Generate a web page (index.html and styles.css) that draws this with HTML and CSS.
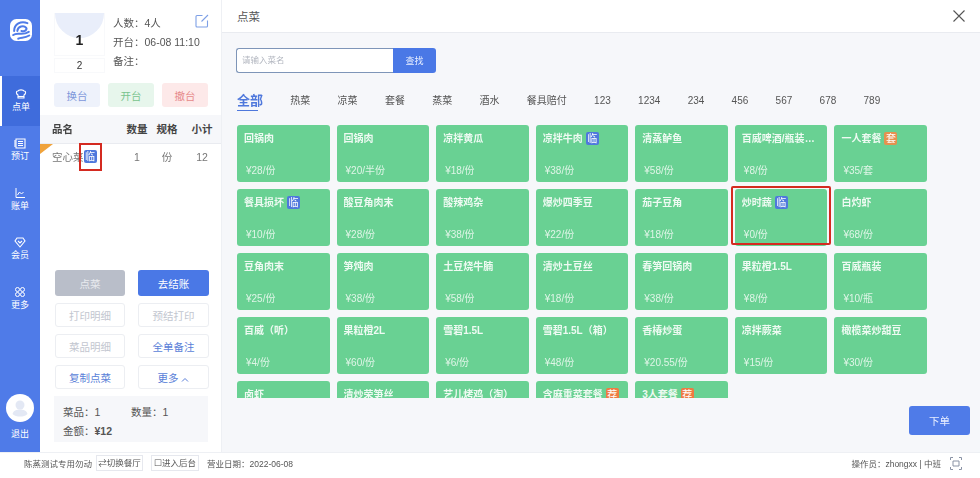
FILE: index.html
```html
<!DOCTYPE html>
<html lang="zh-CN">
<head>
<meta charset="utf-8">
<title>点菜</title>
<link rel="stylesheet" href="styles.css">
</head>
<body>
<div class="app">
  <div class="top">
    <nav class="sidebar">
      <div class="logo">
        <svg width="22" height="22" viewBox="0 0 24 24" fill="none" stroke="#4f7be8" stroke-width="2.200" stroke-linecap="round"><rect width="24" height="24" rx="7" fill="#fff" stroke="none"/><path d="M19 4.500C12 1.500 4.500 5.500 4.500 13"/><path d="M8 13c.5-5 7-6.500 9.500-3.500 1.500 2-1 4.500-5 3.500"/><path d="M3.500 17.500c5-4 9 1.500 17-3.500"/><path d="M9 21.500c3-2 6.500 0 12-3.500"/></svg>
      </div>
      <a class="nav active">
        <svg width="12" height="12" viewBox="0 0 12 12" fill="none" stroke="#fff" stroke-width="1.100"><path d="M3 7C1 6 .8 3 3 3c.5-1.500 5.500-1.500 6 0 2.200 0 2 3 0 4v3H3z"/><path d="M3 8.500h6"/></svg>
        <span>点单</span>
      </a>
      <a class="nav">
        <svg width="12" height="12" viewBox="0 0 12 12" fill="none" stroke="#fff" stroke-width="1.100"><path d="M2 2h9v9H2z"/><path d="M4 4.500h5M4 6.500h5M4 8.500h5M1 3v7"/></svg>
        <span>预订</span>
      </a>
      <a class="nav">
        <svg width="12" height="12" viewBox="0 0 12 12" fill="none" stroke="#fff" stroke-width="1"><path d="M2 1v9.500h9"/><path d="M3.500 8l2-3 2 2 2-2"/></svg>
        <span>账单</span>
      </a>
      <a class="nav">
        <svg width="12" height="12" viewBox="0 0 12 12" fill="none" stroke="#fff" stroke-width="1.100"><path d="M3 2h6l2 3-5 6-5-6z"/><path d="M4 5l2 2 2-2"/></svg>
        <span>会员</span>
      </a>
      <a class="nav">
        <svg width="12" height="12" viewBox="0 0 12 12" fill="none" stroke="#fff" stroke-width="1"><circle cx="3.500" cy="3.500" r="2"/><circle cx="8.500" cy="3.500" r="2"/><circle cx="3.500" cy="8.500" r="2"/><circle cx="8.500" cy="8.500" r="2"/></svg>
        <span>更多</span>
      </a>
      <div class="user">
        <div class="avatar">
          <svg width="28" height="28" viewBox="0 0 28 28"><circle cx="14" cy="14" r="14" fill="#fff"/><circle cx="14" cy="11" r="4.500" fill="#e3e8f4"/><path d="M6.500 20c1-3.500 4-4.500 7.500-4.500s6.500 1 7.500 4.500c-2 2-4.500 2.500-7.500 2.500s-5.500-.5-7.500-2.500z" fill="#e3e8f4"/></svg>
        </div>
        <span>退出</span>
      </div>
    </nav>

    <aside class="panel">
      <section class="table-info">
        <div class="table-card">
          <div class="table-head"><i class="dome"></i><b>1</b></div>
          <div class="table-seat">2</div>
        </div>
        <div class="table-meta">
          <p>人数：4人</p>
          <p>开台：06-08 11:10</p>
          <p>备注：</p>
        </div>
        <svg class="edit" width="14" height="14" viewBox="0 0 14 14" fill="none" stroke="#7ea0e6" stroke-width="1.100"><path d="M7.500 1.500H2a1 1 0 0 0-1 1V12a1 1 0 0 0 1 1h9.500a1 1 0 0 0 1-1V6.500"/><path d="M6.500 7.500L13 1"/></svg>
      </section>
      <div class="ops">
        <button class="op blue">换台</button>
        <button class="op green">开台</button>
        <button class="op red">撤台</button>
      </div>
      <div class="order-head">
        <span class="c-name">品名</span><span class="c-num">数量</span><span class="c-num">规格</span><span class="c-num">小计</span>
      </div>
      <div class="order-row">
        <i class="corner"></i>
        <span class="c-name">空心菜<em class="tag lin">临</em><i class="mark"></i></span><span class="c-num">1</span><span class="c-num">份</span><span class="c-num">12</span>
      </div>
      <div class="actions">
        <button class="act solid-grey">点菜</button>
        <button class="act solid-blue">去结账</button>
        <button class="act line off">打印明细</button>
        <button class="act line off">预结打印</button>
        <button class="act line off">菜品明细</button>
        <button class="act line on">全单备注</button>
        <button class="act line on">复制点菜</button>
        <button class="act line on">更多 <svg width="8" height="5" viewBox="0 0 8 5" fill="none" stroke="#5a7fd8"><path d="M1 4.500L4 1.500l3 3"/></svg></button>
      </div>
      <div class="summary">
        <div class="sum-row"><span class="sum-a">菜品：1</span><span>数量：1</span></div>
        <div class="sum-row"><span>金额：<b>¥12</b></span></div>
      </div>
    </aside>

    <main class="main">
      <header class="main-head">
        <h1>点菜</h1>
        <svg width="12" height="12" viewBox="0 0 12 12" fill="none" stroke="#555" stroke-width="1.100"><path d="M.5.500l11 11M11.500.500l-11 11"/></svg>
      </header>
      <div class="search">
        <div class="search-input">请输入菜名</div>
        <button class="search-btn">查找</button>
      </div>
      <div class="tabs">
        <span class="tab cur">全部</span><span class="tab">热菜</span><span class="tab">凉菜</span><span class="tab">套餐</span><span class="tab">蒸菜</span><span class="tab">酒水</span><span class="tab">餐具赔付</span><span class="tab">123</span><span class="tab">1234</span><span class="tab">234</span><span class="tab">456</span><span class="tab">567</span><span class="tab">678</span><span class="tab">789</span>
      </div>
      <div class="dishes">
        <div class="dish"><div class="nm"><span>回锅肉</span></div><div class="pr">¥28/份</div></div>
        <div class="dish"><div class="nm"><span>回锅肉</span></div><div class="pr">¥20/半份</div></div>
        <div class="dish"><div class="nm"><span>凉拌黄瓜</span></div><div class="pr">¥18/份</div></div>
        <div class="dish"><div class="nm"><span>凉拌牛肉</span><em class="tag lin">临</em></div><div class="pr">¥38/份</div></div>
        <div class="dish"><div class="nm"><span>清蒸鲈鱼</span></div><div class="pr">¥58/份</div></div>
        <div class="dish"><div class="nm"><span>百威啤酒/瓶装规格</span></div><div class="pr">¥8/份</div></div>
        <div class="dish"><div class="nm"><span>一人套餐</span><em class="tag tao">套</em></div><div class="pr">¥35/套</div></div>

        <div class="dish"><div class="nm"><span>餐具损坏</span><em class="tag lin">临</em></div><div class="pr">¥10/份</div></div>
        <div class="dish"><div class="nm"><span>酸豆角肉末</span></div><div class="pr">¥28/份</div></div>
        <div class="dish"><div class="nm"><span>酸辣鸡杂</span></div><div class="pr">¥38/份</div></div>
        <div class="dish"><div class="nm"><span>爆炒四季豆</span></div><div class="pr">¥22/份</div></div>
        <div class="dish"><div class="nm"><span>茄子豆角</span></div><div class="pr">¥18/份</div></div>
        <div class="dish picked"><div class="nm"><span>炒时蔬</span><em class="tag lin">临</em></div><div class="pr">¥0/份</div></div>
        <div class="dish"><div class="nm"><span>白灼虾</span></div><div class="pr">¥68/份</div></div>

        <div class="dish"><div class="nm"><span>豆角肉末</span></div><div class="pr">¥25/份</div></div>
        <div class="dish"><div class="nm"><span>笋炖肉</span></div><div class="pr">¥38/份</div></div>
        <div class="dish"><div class="nm"><span>土豆烧牛腩</span></div><div class="pr">¥58/份</div></div>
        <div class="dish"><div class="nm"><span>清炒土豆丝</span></div><div class="pr">¥18/份</div></div>
        <div class="dish"><div class="nm"><span>春笋回锅肉</span></div><div class="pr">¥38/份</div></div>
        <div class="dish"><div class="nm"><span>果粒橙1.5L</span></div><div class="pr">¥8/份</div></div>
        <div class="dish"><div class="nm"><span>百威瓶装</span></div><div class="pr">¥10/瓶</div></div>

        <div class="dish"><div class="nm"><span>百威（听）</span></div><div class="pr">¥4/份</div></div>
        <div class="dish"><div class="nm"><span>果粒橙2L</span></div><div class="pr">¥60/份</div></div>
        <div class="dish"><div class="nm"><span>雪碧1.5L</span></div><div class="pr">¥6/份</div></div>
        <div class="dish"><div class="nm"><span>雪碧1.5L（箱）</span></div><div class="pr">¥48/份</div></div>
        <div class="dish"><div class="nm"><span>香椿炒蛋</span></div><div class="pr">¥20.55/份</div></div>
        <div class="dish"><div class="nm"><span>凉拌蕨菜</span></div><div class="pr">¥15/份</div></div>
        <div class="dish"><div class="nm"><span>橄榄菜炒甜豆</span></div><div class="pr">¥30/份</div></div>

        <div class="dish"><div class="nm"><span>卤虾</span></div></div>
        <div class="dish"><div class="nm"><span>清炒荣笋丝</span></div></div>
        <div class="dish"><div class="nm"><span>艺儿烤鸡（淘）</span></div></div>
        <div class="dish"><div class="nm"><span>含麻重菜套餐</span><em class="tag jian">荐</em></div></div>
        <div class="dish"><div class="nm"><span>3人套餐</span><em class="tag jian">荐</em></div></div>
      </div>
      <div class="submit-row"><button class="submit">下单</button></div>
    </main>
  </div>

  <footer class="footer">
    <span>陈蒸测试专用勿动</span>
    <button class="foot-btn">⇄切换餐厅</button>
    <button class="foot-btn">☐进入后台</button>
    <span class="foot-date">营业日期：2022-06-08</span>
    <span class="foot-right">操作员：zhongxx | 中班</span>
    <svg width="12" height="13" viewBox="0 0 12 13" fill="none" stroke="#8a93a5" stroke-width="1"><path d="M.5 3V.500H3M9 .500h2.500V3M.5 10v2.500H3M9 12.500h2.500V10"/><path d="M3 4h6v5H3z"/></svg>
  </footer>
</div>
</body>
</html>
```

FILE: styles.css
```css
* { box-sizing: border-box; }
html, body { margin: 0; padding: 0; }
body {
  width: 980px;
  height: 478px;
  overflow: hidden;
  background: #fff;
  font-family: "Liberation Sans", "Noto Sans CJK SC", sans-serif;
  font-size: 10.5px;
  color: #555;
}
button { font: inherit; border: 0; padding: 0; background: none; }
em { font-style: normal; }
p, h1 { margin: 0; font-weight: normal; }

.app { height: 478px; display: flex; flex-direction: column; filter: blur(.45px); }
.top { height: 452px; display: flex; }

/* sidebar */
.sidebar { width: 40px; flex: none; background: #4f7be8; color: #fff; display: flex; flex-direction: column; }
.logo { height: 76px; padding: 19px 0 0 10px; }
.nav { height: 49.500px; display: flex; flex-direction: column; align-items: center; justify-content: center; gap: 1px; font-size: 9px; line-height: 13px; }
.nav.active { background: #3f6cdc; border-left: 2px solid #fff; }
.user { margin-top: auto; padding-bottom: 11px; display: flex; flex-direction: column; align-items: center; font-size: 9px; line-height: 13px; gap: 6px; }
.avatar { height: 28px; }

/* order panel */
.panel { width: 182px; flex: none; background: #fff; display: flex; flex-direction: column; border-right: 1px solid #eef0f4; }
.table-info { position: relative; display: flex; padding: 13px 0 0 14px; height: 83px; }
.table-card { width: 51px; display: flex; flex-direction: column; gap: 2px; }
.table-head { height: 43px; position: relative; border: 1px solid #f8f9fb; border-top: 0; text-align: center; }
.dome { display: block; height: 25px; background: #e9eefa; border-radius: 0 0 25px 25px; }
.table-head b { display: block; font-size: 14px; line-height: 16px; margin-top: -6px; color: #222; position: relative; }
.table-seat { height: 15px; border: 1px solid #f8f9fb; text-align: center; font-size: 10px; line-height: 14px; color: #333; }
.table-meta { margin-left: 8px; padding-top: 1px; line-height: 19px; color: #555; }
.edit { position: absolute; left: 155px; top: 14px; }

.ops { display: flex; justify-content: space-between; padding: 0 13px 0 14px; }
.op { width: 46px; height: 24px; border-radius: 3px; font-size: 10.5px; }
.op.blue { background: #eef2fb; color: #7d97da; }
.op.green { background: #e7f6ec; color: #79c48e; }
.op.red { background: #fde9e9; color: #e68a8a; }

.order-head, .order-row { display: flex; align-items: center; padding-left: 12px; }
.order-head { margin-top: 8px; height: 29px; padding-bottom: 2px; background: #f6f7fa; border-bottom: 1px solid #e9ebf0; font-weight: bold; color: #444; }
.order-row { height: 27px; padding-bottom: 2px; position: relative; margin-bottom: auto; color: #777; }
.c-name { width: 70px; flex: none; position: relative; display: flex; align-items: center; }
.c-num { width: 30px; flex: none; text-align: center; }
.c-num:last-child { width: 40px; }
.corner { position: absolute; left: 0; top: 0; width: 0; height: 0; border-top: 10px solid #f0a33c; border-right: 13px solid transparent; }
.mark { position: absolute; left: 27px; top: -6px; width: 23px; height: 28px; border: 2px solid #d42a20; }

.tag { display: inline-block; flex: none; width: 13px; height: 13px; line-height: 13px; border-radius: 2px; text-align: center; font-size: 10px; font-weight: normal; color: #fff; }
.tag.lin { background: #4f78dc; }
.tag.tao { background: #e6914f; }
.tag.jian { background: #ee7b43; }

.actions { display: grid; grid-template-columns: 70px 71px; column-gap: 13px; padding-left: 15px; grid-template-rows: 26px 24px 24px 24px; row-gap: 7px; margin-bottom: 7px; }
.act { border-radius: 3px; font-size: 10.5px; }
.solid-grey { background: #b9bec9; color: #e8eaee; }
.solid-blue { background: #4a78e6; color: #fff; }
.line { background: #fff; border: 1px solid #eceef2; }
.line.off { color: #c2c6cf; }
.line.on { color: #5a7fd8; }

.summary { margin: 0 13px 10px 14px; height: 46px; padding: 7px 9px; background: #f6f7fa; color: #555; line-height: 19px; }
.sum-row { display: flex; }
.sum-a { width: 68px; }

/* main */
.main { flex: 1; min-width: 0; background: #f6f7fa; display: flex; flex-direction: column; }
.main-head { height: 33px; background: #fff; border-bottom: 1px solid #e9ebf0; display: flex; align-items: center; justify-content: space-between; padding: 0 15px 0 15px; }
.main-head h1 { font-size: 11.500px; color: #555; }
.search { display: flex; margin: 15px 0 0 14px; width: 200px; height: 25px; }
.search-input { flex: 1; background: #fff; border: 1px solid #7e95b8; border-right: 0; border-radius: 3px 0 0 3px; padding-left: 5px; line-height: 23px; font-size: 8.500px; color: #b3b7c0; }
.search-btn { width: 43px; background: #4a78e6; color: #eaf0ff; border-radius: 0 3px 3px 0; font-size: 9px; }
.tabs { display: flex; align-items: center; gap: 27.300px; margin: 15px 0 0 15px; height: 26px; color: #555; font-size: 10px; }
.tab { line-height: 26px; }
.tab.cur { position: relative; font-size: 13px; font-weight: bold; color: #4f78dc; }
.tab.cur::after { content: ""; position: absolute; left: 0; width: 21px; bottom: 3px; height: 1px; background: #4f78dc; }

.dishes { margin: 11px 0 0 15px; width: 690px; height: 273px; overflow: hidden; display: grid; grid-template-columns: repeat(7, minmax(0, 1fr)); grid-auto-rows: 57px; gap: 7px; }
.dish { position: relative; min-width: 0; background: #69d193; border-radius: 3px; padding: 7px 7px 4px; display: flex; flex-direction: column; justify-content: space-between; color: #fff; }
.nm { display: flex; align-items: center; gap: 3px; line-height: 13px; font-size: 10px; font-weight: bold; color: #eefaf2; min-width: 0; }
.nm span { overflow: hidden; white-space: nowrap; text-overflow: ellipsis; min-width: 0; }
.pr { padding-left: 2px; line-height: 14px; font-size: 10px; color: #dff5e7; }
.picked::after { content: ""; position: absolute; left: -4px; right: -4px; top: -3px; bottom: 1px; border: 2px solid #d42a20; border-radius: 2px; }

.submit-row { display: flex; justify-content: flex-end; padding: 8px 10px 0 0; }
.submit { width: 61px; height: 29px; background: #4f7be8; border-radius: 3px; color: #e8eeff; font-size: 10.5px; }

/* footer */
.footer { flex: 1; display: flex; align-items: center; padding: 0 18px 5px 24px; border-top: 1px solid #eef0f4; font-size: 8.500px; color: #555; }
.foot-btn { margin-left: 4px; width: 47px; height: 16px; padding: 0; border: 1px solid #e6e8ee; font-size: 8.500px; color: #555; line-height: 14px; white-space: nowrap; }
.foot-btn + .foot-btn { margin-left: 8px; width: 48px; }
.foot-date { margin-left: 8px; }
.foot-right { margin-left: auto; margin-right: 9px; }
```
